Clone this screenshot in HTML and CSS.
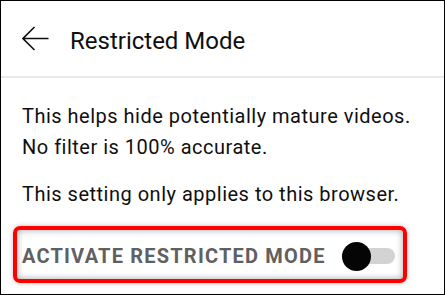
FILE: index.html
```html
<!DOCTYPE html>
<html>
<head>
<meta charset="utf-8">
<link rel="stylesheet" href="styles.css">
</head>
<body>
<div class="page">
  <header class="header">
    <svg class="back" width="28" height="26" viewBox="0 0 28 26">
      <path d="M1 12.5H26.5M12.5 1L1 12.5L12.5 24" fill="none" stroke="#0f0f0f" stroke-width="1.6"/>
    </svg>
    <h1 class="title">Restricted Mode</h1>
  </header>
  <main class="content">
    <p class="text">This helps hide potentially mature videos.<br>No filter is 100% accurate.</p>
    <p class="text">This setting only applies to this browser.</p>
    <div class="row">
      <span class="label">Activate Restricted Mode</span>
      <span class="toggle"><span class="track"></span><span class="knob"></span></span>
    </div>
  </main>
</div>
</body>
</html>
```
FILE: styles.css
```css
html, body {
  margin: 0;
  padding: 0;
  background: #fff;
}
.page {
  box-sizing: border-box;
  width: 445px;
  height: 295px;
  border: 1px solid #000;
  font-family: Roboto, "Liberation Sans", sans-serif;
  color: #0f0f0f;
  overflow: hidden;
}
.header {
  box-sizing: border-box;
  height: 77px;
  padding-top: 4px;
  border-bottom: 2px solid #e8e8e8;
  display: flex;
  align-items: center;
}
.back {
  margin-left: 21px;
  margin-top: -4px;
  flex: none;
}
.title {
  margin: 0 0 0 20px;
  font-size: 24px;
  font-weight: 400;
  line-height: 28px;
}
.content {
  padding: 23px 21px 0 21px;
}
.text {
  margin: 0 0 16px 0;
  font-size: 20px;
  line-height: 31px;
  letter-spacing: 0.5px;
}
.row {
  box-sizing: border-box;
  margin-left: -9px;
  width: 394px;
  height: 57px;
  border: 4px solid #ff0000;
  border-radius: 7px;
  box-shadow: inset 0 0 7px rgba(0,0,0,0.35), 0 0 5px rgba(0,0,0,0.25);
  display: flex;
  align-items: center;
  padding: 3px 0 0 5px;
}
.label {
  font-size: 20px;
  font-weight: 700;
  text-transform: uppercase;
  color: #606060;
  letter-spacing: 1.2px;
}
.toggle {
  position: relative;
  width: 53px;
  height: 29px;
  margin-left: 16px;
}
.track {
  position: absolute;
  left: 3px;
  top: 6px;
  width: 50px;
  height: 16px;
  border-radius: 8px;
  background: #d3d3d3;
}
.knob {
  position: absolute;
  left: 0;
  top: 0;
  width: 29px;
  height: 29px;
  border-radius: 50%;
  background: #050505;
}
```
